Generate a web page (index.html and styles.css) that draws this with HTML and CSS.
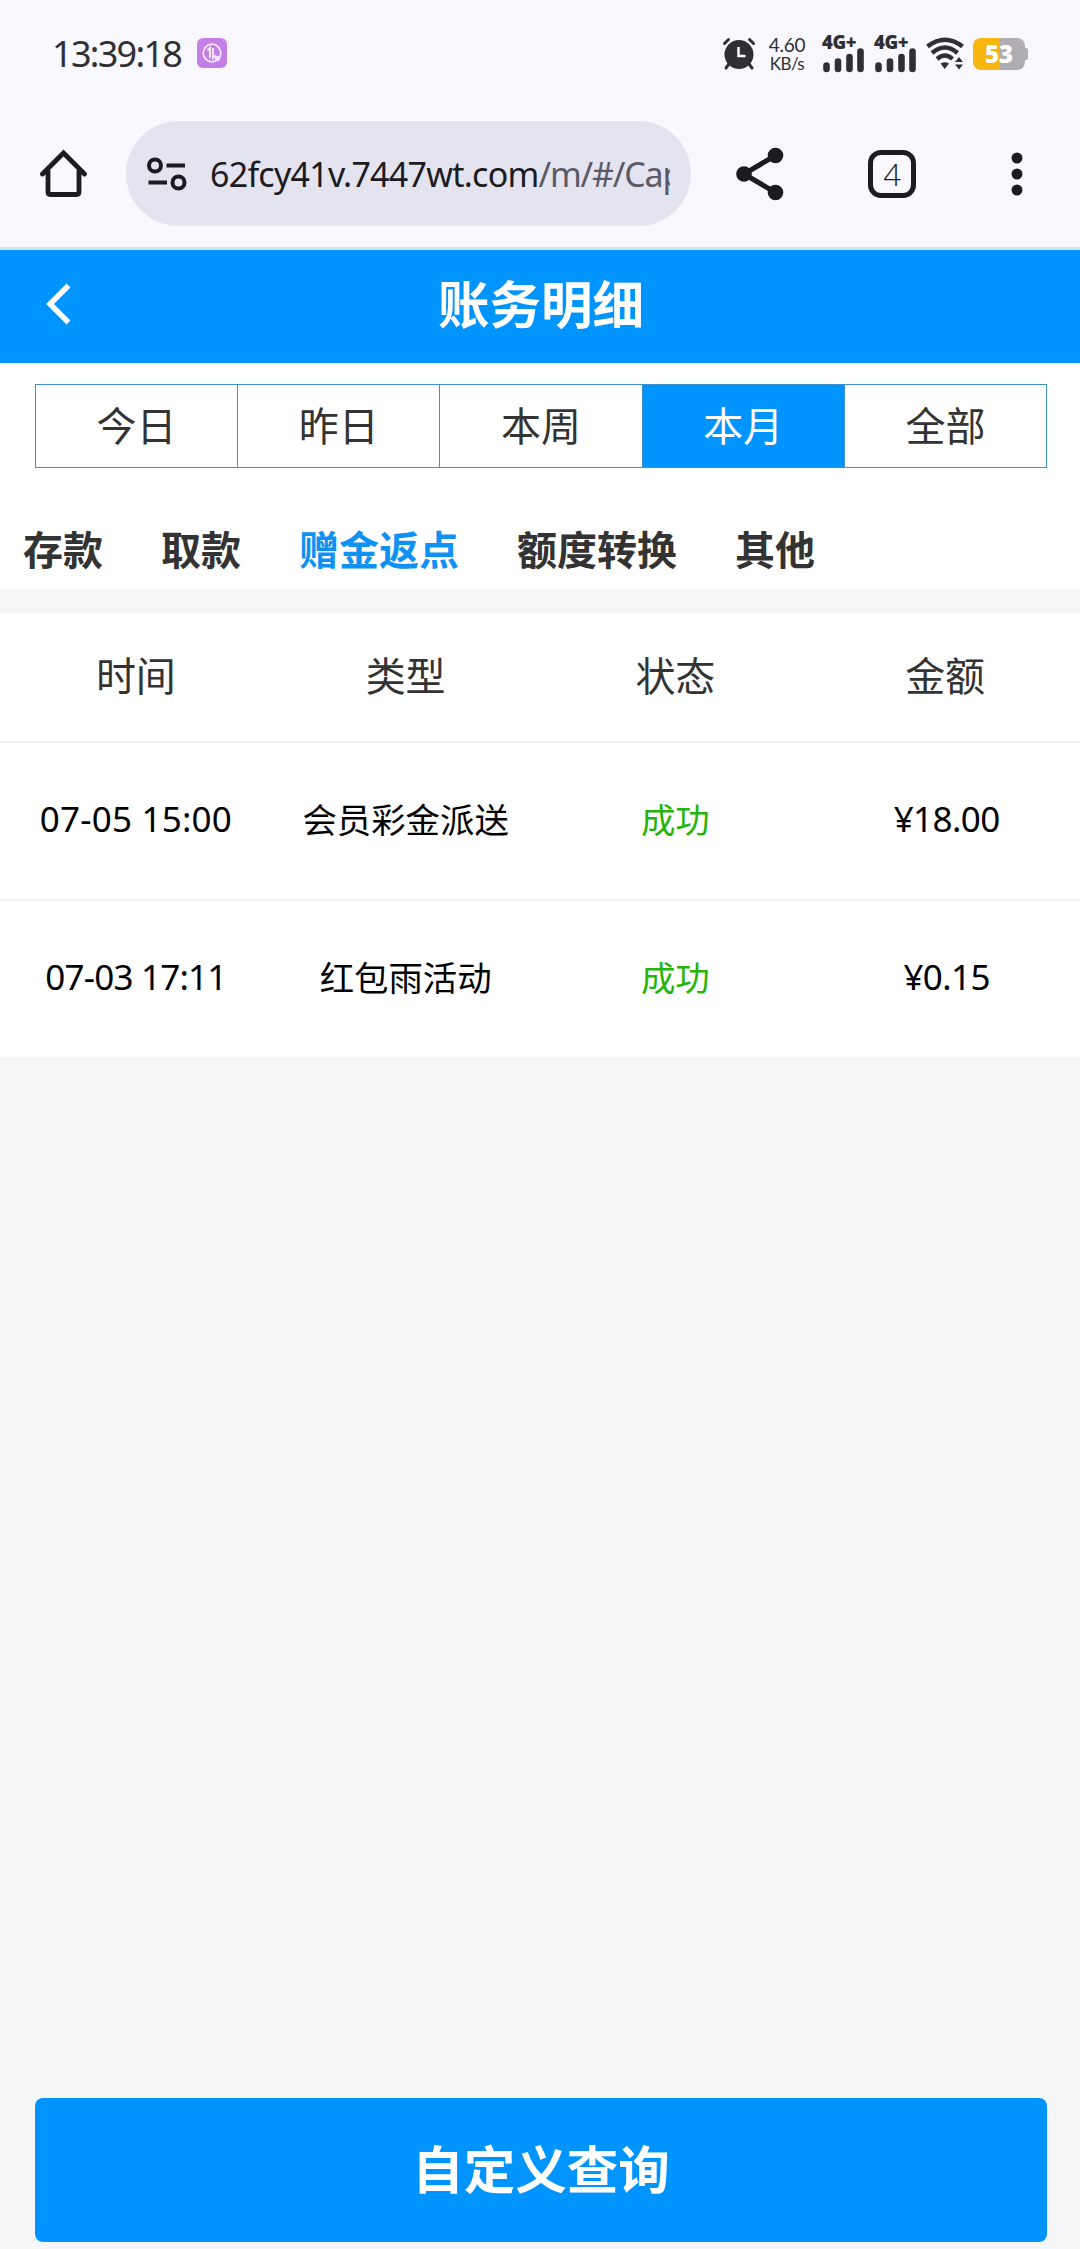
FILE: index.html
```html
<!DOCTYPE html>
<html lang="zh-CN">
<head>
<meta charset="utf-8">
<title>账务明细</title>
<link rel="stylesheet" href="styles.css">
</head>
<body>
<div class="statusbar">
  <span class="clock">13:39:18</span>
  <svg class="app-badge" width="30" height="30" viewBox="0 0 30 30"><rect width="30" height="30" rx="6" fill="#c47fe6"/><circle cx="15" cy="15" r="8.8" fill="none" stroke="#f8e4ff" stroke-width="1.8"/><path d="M10.5 12.5l2.5-2.5v10M16 10v10l3-2.500" fill="none" stroke="#f8e4ff" stroke-width="2"/><circle cx="20.500" cy="20.500" r="2.500" fill="#f8e4ff"/></svg>
  <div class="indicators">
    <svg class="alarm" width="34" height="34" viewBox="0 0 34 34"><g stroke="#303034" stroke-width="3" stroke-linecap="round"><path d="M2.500 6.500l4-4M31.500 6.500l-4-4M7 27l-3 4M27 27l3 4"/></g><circle cx="17" cy="17.500" r="14.500" fill="#303034"/><path d="M16.500 10v9h7" fill="none" stroke="#f9f8ff" stroke-width="2.500"/></svg>
    <div class="speed"><span>4.60</span><span class="unit">KB/s</span></div>
    <div class="cell"><b>4G+</b><svg width="42" height="25" viewBox="0 0 42 25"><path d="M4.500 17.500v3.500M16 13.500v7.500M27.500 9v12M38.500 3.500v17.500" stroke="#303034" stroke-width="6.600" stroke-linecap="round"/></svg></div>
    <div class="cell"><b>4G+</b><svg width="42" height="25" viewBox="0 0 42 25"><path d="M4.500 17.500v3.500M16 13.500v7.500M27.500 9v12M38.500 3.500v17.500" stroke="#303034" stroke-width="6.600" stroke-linecap="round"/></svg></div>
    <svg class="wifi" width="38" height="34" viewBox="0 0 38 34"><g fill="none" stroke="#303034" stroke-width="4.400"><path d="M1.500 9.500Q19-4 36.500 9.500"/><path d="M6 16Q19 5 31.500 16"/><path d="M11 22Q19 15 26.500 22"/></g><path d="M14.500 26.500q4.500-2.500 8.500 0l-4.300 5.500zM29 25l4-5 4 5zM29 27.500l4 5 4-5z" fill="#303034"/></svg>
    <div class="battery">53</div>
  </div>
</div>
<div class="browserbar">
  <svg class="home" width="48" height="50" viewBox="0 0 48 50"><path d="M2.500 25L23.500 4l21 21M8 22v21q0 2.500 2.500 2.500h26q2.500 0 2.500-2.500V22" fill="none" stroke="#1b1b21" stroke-width="4.800" stroke-linecap="round"/></svg>
  <div class="urlbox">
    <svg width="40" height="34" viewBox="0 0 40 34"><g fill="none" stroke="#1b1b21" stroke-width="4"><circle cx="8" cy="8.500" r="6"/><circle cx="31.500" cy="25.500" r="6"/><path d="M19.500 8.500H38M1.500 25.500H20"/></g></svg>
    <div class="url">62fcy41v.7447wt.com<span>/m/#/Cap</span></div>
  </div>
  <svg class="share" width="48" height="54" viewBox="0 0 48 54"><path d="M39.500 8.500L8 27l31.500 18.500" fill="none" stroke="#1b1b21" stroke-width="5"/><g fill="#1b1b21"><circle cx="39.500" cy="8.500" r="7.800"/><circle cx="8" cy="27" r="7.800"/><circle cx="39.500" cy="45.500" r="7.800"/></g></svg>
  <div class="tabcount">4</div>
  <svg class="more" width="12" height="44" viewBox="0 0 12 44"><g fill="#1b1b21"><circle cx="6" cy="6" r="5.500"/><circle cx="6" cy="22" r="5.500"/><circle cx="6" cy="38" r="5.500"/></g></svg>
</div>
<header class="header">
  <svg class="back" width="26" height="42" viewBox="0 0 26 42"><path d="M22.500 2.500L4 21l18.500 18.500" fill="none" stroke="#fff" stroke-width="5.500"/></svg>
  <h1>账务明细</h1>
</header>
<section class="filters">
  <div class="periods"><span>今日</span><span>昨日</span><span>本周</span><span class="active">本月</span><span>全部</span></div>
  <nav class="kinds"><span>存款</span><span>取款</span><span class="active">赠金返点</span><span>额度转换</span><span>其他</span></nav>
</section>
<main class="records">
  <div class="row head"><span>时间</span><span>类型</span><span>状态</span><span>金额</span></div>
  <div class="row"><span class="date">07-05 15:00</span><span>会员彩金派送</span><span class="ok">成功</span><span class="amount">¥18.00</span></div>
  <div class="row"><span class="date tight">07-03 17:11</span><span>红包雨活动</span><span class="ok">成功</span><span class="amount">¥0.15</span></div>
</main>
<button class="query">自定义查询</button>
</body>
</html>
```
FILE: styles.css
```css
* { box-sizing: border-box; }
body { margin: 0; width: 1080px; height: 2249px; overflow: hidden; display: flex; flex-direction: column; background: #f4f6f8; font-family: "Noto Sans", "Noto Sans CJK SC", sans-serif; color: #333; }
svg { display: block; flex: none; }

.statusbar { height: 107px; background: #f9f8ff; display: flex; align-items: center; padding: 0 55px 0 52px; color: #303034; }
.clock { font-size: 36px; line-height: 40px; width: 145px; white-space: nowrap; letter-spacing: -1.7px; }
.app-badge { margin-bottom: 1px; }
.indicators { margin-left: auto; display: flex; align-items: center; }
.speed { display: flex; flex-direction: column; align-items: center; width: 38px; margin: 0 16px 0 12px; font: 19px/19px Lato, sans-serif; letter-spacing: -0.3px; }
.speed .unit { font-size: 17px; letter-spacing: -0.6px; }
.cell { width: 41px; height: 38px; margin-right: 11px; }
.cell b { display: block; font: 800 18.5px/13px "Open Sans", sans-serif; letter-spacing: -0.4px; }
.battery { position: relative; width: 52px; height: 32px; margin-left: 9px; border-radius: 8px; background: linear-gradient(90deg, #f8b60f 52%, #afadb3 52%); color: #fff; font: 800 24px/32px "Open Sans", sans-serif; text-align: center; }
.battery::after { content: ""; position: absolute; left: 52px; top: 10px; width: 3px; height: 12px; border-radius: 0 2px 2px 0; background: #afadb3; }

.browserbar { height: 143px; background: #f9f8ff; border-bottom: 3px solid #c9e7fb; display: flex; align-items: flex-start; padding-top: 14px; padding-left: 40px; }
.home { margin-top: 28px; }
.urlbox { width: 565px; height: 105px; margin-left: 38px; border-radius: 53px; background: #e4e3f0; display: flex; align-items: center; padding-left: 21px; }
.url { width: 460px; margin-left: 23px; overflow: hidden; white-space: nowrap; font-size: 34px; letter-spacing: -0.75px; color: #1b1b21; }
.url span { color: #5a5a66; letter-spacing: -1.2px; }
.share { margin-left: 45px; margin-top: 26px; }
.tabcount { width: 48px; height: 48px; margin: 29px 0 0 84px; border: 5px solid #1b1b21; border-radius: 13px; text-align: center; font: 300 31px/38px "Open Sans", sans-serif; color: #1b1b21; }
.more { margin: 31px 0 0 95px; }

.header { height: 113px; background: #0094ff; display: flex; align-items: center; padding: 0 0 6px 46px; color: #fff; }
.header h1 { flex: 1; margin: 0 116px 0 46px; text-align: center; font-size: 51.5px; line-height: 60px; }

.filters { height: 226px; background: #fff; padding: 21px 33px 0 35px; }
.periods { height: 84px; display: flex; border: 1px solid #3a93cf; }
.periods span { flex: 1; text-align: center; font-size: 40px; line-height: 82px; border-left: 1px solid #3a93cf; }
.periods span:first-child { border-left: 0; }
.periods .active { background: #0094ff; color: #fff; }
.kinds { display: flex; gap: 58px; margin: 52px 0 0 -12px; font-size: 40px; line-height: 60px; font-weight: 700; }
.kinds .active { color: #0f92f3; }

.records { margin-top: 24px; background: #fff; }
.row { height: 158px; display: grid; grid-template-columns: repeat(4, 1fr); align-items: center; padding: 0 0 6px 1px; text-align: center; font-size: 34.4px; color: #000; }
.row.head { height: 128px; font-size: 40px; color: #333; }
.row + .row { border-top: 2px solid #f0f0f2; }
.row .ok { color: #26b409; }
.date { font-size: 35px; letter-spacing: 0.2px; }
.date.tight { letter-spacing: -0.8px; }
.amount { font-size: 35px; letter-spacing: -0.6px; padding-left: 3px; }

.query { width: 1012px; height: 144px; margin: auto 33px 7px 35px; flex: none; border: 0; border-radius: 8px; padding: 0 0 7px; background: #0094ff; color: #fff; font: 700 51.5px "Noto Sans CJK SC", sans-serif; }
```
